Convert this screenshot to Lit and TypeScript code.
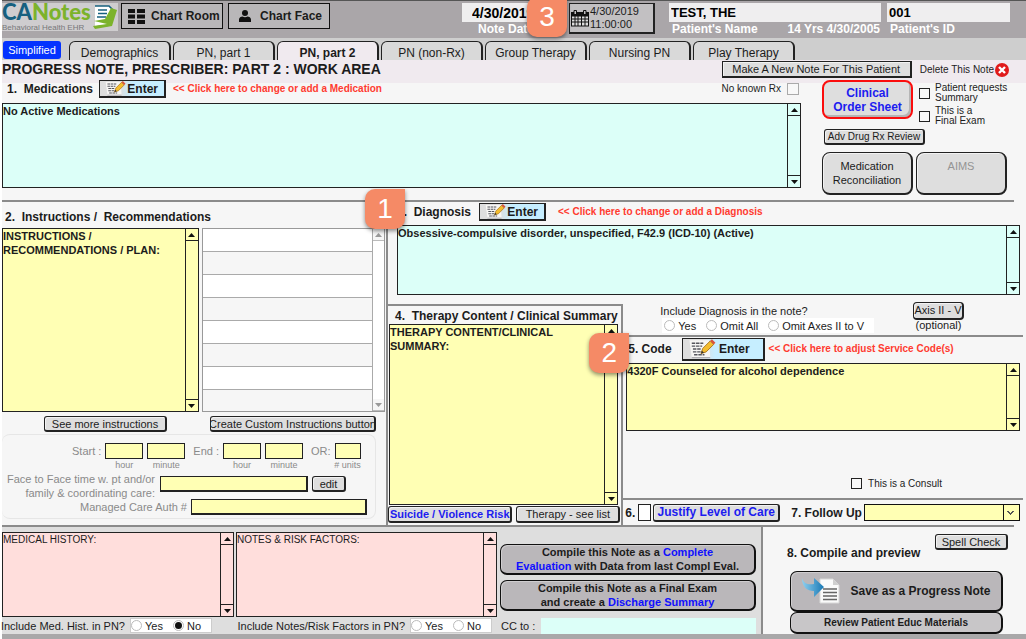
import { LitElement, html, css, svg } from "lit";
import { customElement, property, state } from "lit/decorators.js";
import { classMap } from "lit/directives/class-map.js";

/* Multi-line field with a classic arrow scrollbar on its right side. */
@customElement("note-box")
class NoteBox extends LitElement {
  @property() label = "";
  @property() text = "";
  @property() tone = "mint";
  @property({ type: Boolean }) plain = false;

  static styles = css`
    :host {
      display: flex;
      min-width: 0;
      box-sizing: border-box;
      border: 1px solid #222;
      font-family: "Liberation Sans", Arial, sans-serif;
    }
    textarea {
      flex: 1;
      min-width: 0;
      box-sizing: border-box;
      border: 0;
      margin: 0;
      padding: 0;
      resize: none;
      outline: 0;
      overflow: hidden;
      font: bold 11px/14px "Liberation Sans", Arial, sans-serif;
      color: #1c1c1c;
    }
    .plain {
      font-weight: normal;
      font-size: 10px;
    }
    .mint {
      background: #dcfff8;
    }
    .yellow {
      background: #ffffb4;
    }
    .pink {
      background: #ffdedc;
    }
    .bar {
      display: flex;
      flex-direction: column;
      justify-content: space-between;
      flex: none;
      width: 12px;
      border-left: 1px solid #222;
    }
    button {
      display: flex;
      align-items: center;
      justify-content: center;
      height: 12px;
      padding: 0;
      border: 0 solid #222;
      background: none;
    }
    .up {
      border-bottom-width: 1px;
    }
    .down {
      border-top-width: 1px;
    }
  `;

  private scroll(step: number) {
    this.renderRoot.querySelector("textarea")?.scrollBy(0, step);
  }

  render() {
    return html`
      <textarea
        class=${classMap({ [this.tone]: true, plain: this.plain })}
        aria-label=${this.label}
        .value=${this.text}
      ></textarea>
      <div class=${classMap({ bar: true, [this.tone]: true })}>
        <button class="up" aria-label="Scroll up" @click=${() => this.scroll(-14)}>
          <svg width="7" height="4"><path d="M0 4 3.500 0 7 4z" fill="#111" /></svg>
        </button>
        <button class="down" aria-label="Scroll down" @click=${() => this.scroll(14)}>
          <svg width="7" height="4"><path d="M0 0 3.500 4 7 0z" fill="#111" /></svg>
        </button>
      </div>
    `;
  }
}

const penIcon = svg`
  <path d="M3 1h17l1 15H5z" fill="#f7f6f4"/>
  <path d="M5 3.500h10M5 6h9M6 8.500h7M6 11h8M7 13.500h9" stroke="#55555c" stroke-width="1.200" stroke-dasharray="3 .7"/>
  <path d="M5 16h16" stroke="#a9a9ad"/>
  <path d="m13 12.500 1.500-4.500L21 1.500l3 3-6.500 6.500z" fill="#f4bd2f" stroke="#a8731b" stroke-width=".8"/>
  <path d="m21 1.500 1.500-1.500 3 3L24 4.500z" fill="#d9533b"/>
  <path d="m13 12.500 .8-2.500 1.800 1.700z" fill="#333"/>`;

@customElement("app-root")
class AppRoot extends LitElement {
  @state() private tab = "PN, part 2";

  static styles = css`
    :host {
      display: block;
      font: 11px/14px "Liberation Sans", Arial, sans-serif;
      color: #1c1c1c;
      background: #fff;
    }
    * {
      box-sizing: border-box;
    }
    button,
    input,
    select {
      font: inherit;
      color: inherit;
      margin: 0;
    }
    .page {
      padding-left: 2px;
      overflow: hidden;
    }

    /* header */
    .header {
      display: flex;
      align-items: flex-start;
      height: 38px;
      padding: 2px 16px 0 0;
      border-top: 1px solid #555;
      background: #aaa6a9;
      font-size: 12px;
      font-weight: bold;
    }
    .logo {
      flex: none;
      width: 116px;
      height: 28px;
      background: #cfcdcf;
      margin-right: 3px;
    }
    .logo svg {
      display: block;
      overflow: visible;
    }
    .nav {
      display: flex;
      align-items: center;
      gap: 6px;
      height: 26px;
      width: 102px;
      margin-right: 5px;
      padding: 0 6px;
      border: 1px solid #111;
      background: #b9b7b9;
      font-weight: bold;
      white-space: nowrap;
    }
    .nav svg {
      flex: none;
    }
    .nav.face {
      padding: 0 10px;
      gap: 9px;
    }
    .cell {
      position: relative;
      display: flex;
      flex-direction: column;
      color: #fff;
      white-space: nowrap;
    }
    .cell input {
      height: 19px;
      width: 100%;
      border: 0;
      padding: 0 2px;
      background: #efeeef;
      color: #000;
      font-size: 13px;
      font-weight: bold;
    }
    .cell label,
    .sub {
      display: flex;
      justify-content: space-between;
      padding: 0 1px 0 3px;
    }
    .date {
      width: 103px;
      margin-left: auto;
    }
    .date input {
      padding-left: 10px;
      font-size: 14px;
    }
    .date label {
      padding-left: 16px;
    }
    .stamp {
      display: flex;
      align-items: center;
      gap: 1px;
      width: 86px;
      height: 31px;
      margin: 0 14px 0 4px;
      padding: 0 1px;
      border: 1px solid #222;
      border-width: 1px 2px 2px 1px;
      background: #c2c0c2;
      font-size: 11px;
      font-weight: normal;
      line-height: 13px;
      text-align: left;
    }
    .name {
      width: 212px;
    }
    .pid {
      width: 123px;
      margin-left: 6px;
    }
    .marker {
      position: absolute;
      z-index: 2;
      width: 40px;
      height: 40px;
      border-radius: 10px 0 10px 10px;
      background: #f58a66;
      box-shadow: 0 2px 4px rgba(0, 0, 0, 0.45);
      color: #fff;
      font: 28px/40px "Liberation Sans", Arial, sans-serif;
      text-align: center;
    }
    .m1 {
      left: -23px;
      top: -13px;
    }
    .m2 {
      left: -34px;
      top: -4px;
    }
    .m3 {
      left: 65px;
      top: -6px;
    }

    /* tabs */
    .tabs {
      display: flex;
      align-items: flex-end;
      gap: 2px;
      height: 22px;
      background: #cecece;
    }
    .simple {
      align-self: flex-end;
      width: 58px;
      height: 18px;
      margin: 0 6px 1px 1px;
      padding: 0;
      border: 0;
      border-radius: 3px;
      background: #0433ff;
      color: #fff;
    }
    .tab {
      width: 102px;
      height: 19px;
      padding: 3px 0 0;
      border: 1px solid #222;
      border-width: 1px 2px 0 1px;
      border-radius: 6px 6px 0 0;
      background: #d9d9d9;
      font-size: 12px;
      line-height: 14px;
    }
    .tab.on {
      background: #f0eaef;
      font-weight: bold;
    }

    /* work area */
    .work {
      background: linear-gradient(#f0eaef 23px, #f6f6f6 23px);
    }
    .title {
      display: flex;
      align-items: center;
      height: 19px;
      padding-right: 17px;
    }
    h1 {
      flex: 1;
      margin: 0;
      padding-bottom: 2px;
      font-size: 14px;
      line-height: 16px;
      white-space: nowrap;
    }
    .btn {
      display: inline-flex;
      align-items: center;
      justify-content: center;
      height: 16px;
      padding: 0;
      border: 1px solid #222;
      border-width: 1px 2px 2px 1px;
      border-radius: 3px;
      background: #dedede;
      box-shadow: inset 1px 1px #f2f2f2;
      white-space: nowrap;
      overflow: hidden;
    }
    .square {
      width: 190px;
      height: 17px;
      border-radius: 0;
    }
    .delete {
      display: flex;
      align-items: center;
      gap: 1px;
      margin-left: 8px;
      padding: 0;
      border: 0;
      background: none;
      font-size: 10px;
    }
    h2 {
      margin: 0;
      font-size: 12px;
      line-height: 16px;
      white-space: nowrap;
    }
    .head {
      display: flex;
      align-items: center;
    }
    .enter {
      display: flex;
      align-items: center;
      justify-content: space-between;
      flex: none;
      width: 67px;
      height: 18px;
      padding: 0 6px 0 3px;
      border: 1px solid #222;
      border-width: 1px 2px 2px 1px;
      background: linear-gradient(90deg, #dedede 20px, #c6eeff 32px);
      font-size: 12px;
      font-weight: bold;
    }
    .enter.wide {
      width: 83px;
      height: 23px;
      padding-right: 13px;
    }
    .hint {
      color: #ff3b30;
      font-size: 10px;
      font-weight: bold;
      text-decoration: none;
      white-space: nowrap;
    }
    .meds {
      display: flex;
      padding-bottom: 5px;
    }
    .medlist {
      flex: 1;
      min-width: 0;
    }
    .medlist .head {
      height: 24px;
      padding: 0 2px 4px 5px;
    }
    .medlist .enter {
      margin: 0 7px 0 6px;
    }
    .medlist note-box {
      height: 85px;
    }
    .norx {
      display: flex;
      align-items: center;
      gap: 6px;
      margin-left: auto;
      font-size: 10px;
    }
    input[type="checkbox"] {
      appearance: none;
      flex: none;
      width: 11px;
      height: 11px;
      border: 1px solid #222;
      background: #f8f8f8;
    }
    input[type="checkbox"]:checked {
      background: #222;
    }
    .norx input[type="checkbox"] {
      width: 12px;
      height: 12px;
      border-color: #aaa;
    }
    .orders {
      flex: none;
      width: 205px;
      margin-left: 20px;
      padding: 1px 0 0 1px;
    }
    .pair {
      display: flex;
      gap: 3px;
    }
    .big {
      width: 91px;
      height: 43px;
      border-radius: 8px;
      line-height: 14px;
    }
    .clinical {
      height: 39px;
      border: 2px solid #fb0d0d;
      color: #1c1cf0;
      font-size: 12px;
      font-weight: bold;
      box-shadow: inset -2px -2px #b5b5b5;
    }
    .aims {
      padding-bottom: 14px;
      color: #949494;
    }
    .checks {
      display: flex;
      flex-direction: column;
      gap: 3px;
      padding: 3px 0 0 3px;
    }
    .checks label {
      display: flex;
      align-items: center;
      gap: 5px;
      font-size: 10px;
      line-height: 10px;
    }
    .adv {
      width: 101px;
      margin: 3px 0 7px 2px;
      font-size: 10px;
    }
    .rule {
      height: 2px;
      margin-right: 12px;
      background: #8b8b8b;
    }

    .split {
      display: grid;
      grid-template-columns: minmax(0, 386fr) minmax(0, 638fr);
    }
    .left {
      border-right: 2px solid #8b8b8b;
    }
    .left h2 {
      padding: 7px 0 3px 3px;
    }
    .lists {
      display: flex;
      gap: 3px;
      height: 184px;
      padding-right: 1px;
    }
    .lists note-box {
      flex: 197;
    }
    .list {
      display: flex;
      flex: 183;
      border: 1px solid #999;
      background: #fff;
    }
    .rows {
      flex: 1;
      margin: 0;
      padding: 0;
      list-style: none;
    }
    .rows li {
      height: 23px;
      border-bottom: 1px solid #aaa;
    }
    .rows li:last-child {
      height: 21px;
      border: 0;
    }
    .rows li:nth-child(even) {
      background: #f6f6f6;
    }
    .ghostbar {
      display: flex;
      flex-direction: column;
      justify-content: space-between;
      width: 12px;
      border-left: 1px solid #aaa;
    }
    .ghostbar button {
      display: flex;
      align-items: center;
      justify-content: center;
      height: 12px;
      padding: 0;
      border: 0;
      border-bottom: 1px solid #bbb;
      background: #f6f6f6;
    }
    .actions {
      display: flex;
      justify-content: space-between;
      padding: 4px 10px 2px 42px;
    }
    .more {
      width: 123px;
    }
    .custom {
      width: 166px;
    }
    .times {
      height: 85px;
      margin: 0 10px 6px 0;
      padding: 8px 8px 0 0;
      border: 1px solid #e6e6e6;
      border-left: 0;
      border-radius: 8px;
      color: #8a8a8a;
    }
    .clock {
      display: flex;
      align-items: flex-start;
      gap: 4px;
      height: 29px;
      padding-left: 70px;
      line-height: 16px;
      white-space: nowrap;
    }
    .clock .part {
      display: flex;
      flex-direction: column;
      align-items: center;
      width: 38px;
      font-size: 9px;
      line-height: 12px;
    }
    .clock .part.units {
      width: 26px;
    }
    .gap {
      margin-left: 4px;
    }
    .yin {
      width: 100%;
      height: 16px;
      padding: 0 2px;
      border: 1px solid #222;
      background: #ffffb4;
    }
    .deep {
      border-width: 1px 2px 2px 1px;
    }
    .face2 {
      display: flex;
      align-items: flex-start;
      height: 28px;
    }
    .face2 label {
      width: 155px;
      padding-right: 2px;
      text-align: right;
      white-space: nowrap;
    }
    .face2 .yin {
      width: 148px;
      margin: 4px 4px 0 3px;
    }
    .edit {
      width: 34px;
      margin-top: 4px;
      color: #1c1c1c;
    }
    .auth {
      display: flex;
      align-items: center;
      justify-content: flex-end;
      gap: 4px;
      height: 14px;
    }
    .auth .yin {
      width: 176px;
    }

    .dx {
      position: relative;
    }
    .dx .head {
      height: 23px;
      padding: 0 0 3px 9px;
    }
    .dx .enter {
      margin: 0 12px 0 8px;
    }
    .dx note-box {
      height: 70px;
      margin: 0 6px 0 9px;
    }
    .lower {
      display: flex;
    }
    .therapy {
      flex: 234;
      margin-top: 9px;
      border: 2px solid #8b8b8b;
      border-width: 2px 2px 0 0;
      min-width: 0;
    }
    .therapy h2 {
      padding: 2px 0 0 7px;
      overflow: hidden;
    }
    .therapy note-box {
      height: 181px;
      margin: 0 3px 0 1px;
    }
    .therapy .pair {
      padding: 1px 1px 2px 0;
      gap: 4px;
    }
    .therapy .btn {
      height: 17px;
    }
    .risk {
      flex: 124;
      color: #1c1cf0;
      font-weight: bold;
    }
    .see {
      flex: 103;
    }
    .side {
      flex: 404;
      min-width: 0;
    }
    .include {
      display: flex;
      justify-content: space-between;
      height: 40px;
      padding: 7px 62px 0 37px;
    }
    fieldset {
      margin: 0;
      padding: 0;
      border: 0;
    }
    .include legend {
      padding: 2px 0 0;
    }
    .radios {
      display: flex;
      flex: none;
      align-items: center;
      gap: 10px;
      height: 15px;
      padding: 0 10px 0 2px;
      background: #fff;
      white-space: nowrap;
    }
    .include .radios {
      margin-left: 2px;
    }
    .radios label {
      display: flex;
      align-items: center;
      gap: 3px;
    }
    input[type="radio"] {
      appearance: none;
      width: 11px;
      height: 11px;
      border: 1px solid #bbb;
      border-radius: 50%;
      background: #fff;
    }
    input[type="radio"]:checked {
      background: #111;
      border: 2px solid #fff;
      outline: 1px solid #bbb;
      outline-offset: -1px;
    }
    .axis {
      display: flex;
      flex-direction: column;
      align-items: center;
      line-height: 11px;
    }
    .axis .btn {
      width: 51px;
      height: 18px;
      border-radius: 4px;
    }
    .side .rule {
      margin-right: 3px;
    }
    .code {
      position: relative;
    }
    .code .head {
      height: 26px;
      padding: 0 0 2px 5px;
    }
    .code .enter {
      margin: 0 4px 0 10px;
    }
    .code note-box {
      height: 68px;
      margin: 0 6px 0 3px;
    }
    .consult {
      display: flex;
      align-items: center;
      justify-content: flex-end;
      gap: 6px;
      height: 67px;
      padding: 38px 84px 0 0;
      font-size: 10px;
    }
    .care {
      display: flex;
      align-items: center;
      height: 25px;
      padding: 0 6px 0 2px;
    }
    .care input[type="checkbox"] {
      width: 13px;
      height: 17px;
      margin: 0 2px 0 3px;
      background: #fff;
    }
    .justify {
      width: 127px;
      height: 18px;
      margin-right: 11px;
      color: #1c1cf0;
      font-size: 12px;
      font-weight: bold;
    }
    .pick {
      flex: 1;
      min-width: 0;
      height: 17px;
      margin-left: 2px;
      border: 1px solid #111;
      border-radius: 0;
      appearance: none;
      background:
        linear-gradient(45deg, transparent 50%, #555 50% 65%, transparent 65%) right 8px center / 4px 4px no-repeat,
        linear-gradient(-45deg, transparent 50%, #555 50% 65%, transparent 65%) right 5px center / 4px 4px no-repeat,
        linear-gradient(#111, #111) right 15px top / 1px 100% no-repeat,
        #ffffb4;
    }

    /* bottom */
    .bottom {
      display: grid;
      grid-template-columns: minmax(0, 761fr) minmax(0, 263fr);
      border-bottom: 5px solid #a9a8a9;
    }
    .history {
      display: grid;
      grid-template-columns: minmax(0, 232fr) minmax(0, 261fr) minmax(0, 257fr);
      align-content: start;
      column-gap: 2px;
      padding: 5px 5px 0 0;
      border-right: 2px solid #8b8b8b;
      background: #dedede;
    }
    .history note-box {
      height: 85px;
    }
    .ask {
      display: flex;
      align-items: center;
      justify-content: flex-end;
      gap: 5px;
      height: 17px;
      white-space: nowrap;
    }
    .ask .radios {
      width: 82px;
      border: 1px solid #ccc;
      padding: 0;
    }
    .first {
      padding-right: 22px;
    }
    .second {
      padding-right: 5px;
    }
    .compile {
      display: flex;
      flex-direction: column;
      gap: 5px;
      padding: 12px 0 0 1px;
    }
    .dark {
      display: block;
      border: 1px solid #111;
      border-width: 1px 2px 2px 1px;
      border-radius: 7px;
      background: #bab7ba;
      font-weight: bold;
      text-align: center;
      box-shadow: inset 1px 1px #cfcdcf;
    }
    .compile .dark {
      height: 31px;
      padding: 0;
      font-size: 11px;
      line-height: 14px;
      white-space: nowrap;
    }
    .blue {
      color: #1010ff;
    }
    .cc {
      display: flex;
      align-items: center;
      gap: 6px;
      height: 17px;
      padding-left: 2px;
      white-space: nowrap;
    }
    .cc input {
      flex: 1;
      min-width: 0;
      height: 16px;
      border: 0;
      padding: 0;
      background: #dcfff8;
    }
    .finish {
      display: flex;
      flex-direction: column;
      padding: 7px 23px 0 27px;
      background: #f6f6f6;
    }
    .spell {
      align-self: flex-end;
      width: 73px;
      margin-right: -5px;
    }
    .finish h2 {
      margin: -5px 0 10px -3px;
    }
    .save {
      display: flex;
      align-items: center;
      justify-content: center;
      gap: 9px;
      height: 41px;
      font-size: 12px;
      white-space: nowrap;
    }
    .finish .review {
      height: 22px;
      padding: 0;
      font-size: 10px;
      background: #c8c6c8;
    }
  `;

  private enter(wide = false) {
    return html`<button class=${classMap({ enter: true, wide })}>
      <svg width=${wide ? 30 : 23} height=${wide ? 20 : 15} viewBox="0 0 26 17">${penIcon}</svg>
      Enter
    </button>`;
  }

  private radios(name: string, options: string[], checked = "") {
    return html`<div class="radios">
      ${options.map(
        (o) => html`<label><input type="radio" name=${name} ?checked=${o === checked} />${o}</label>`
      )}
    </div>`;
  }

  private timePart(caption: string, name: string, cls = "") {
    return html`<label class="part ${cls}"><input class="yin" name=${name} />${caption}</label>`;
  }

  private header() {
    return html`<header class="header">
      <div class="logo" role="img" aria-label="ICANotes Behavioral Health EHR">
        <svg width="116" height="28" viewBox="0 0 116 28">
          <text y="17" font-family="Lato, sans-serif" font-weight="900" font-size="22" fill="#17607f">CA<tspan fill="#7cb32b">Notes</tspan></text>
          <text x="0" y="27" font-family="Liberation Sans, sans-serif" font-weight="400" font-size="8" fill="#77787a">Behavioral Health EHR</text>
          <path d="M93 3h14l3 3-2 16-15 2" fill="#fff" stroke="#17607f" stroke-width="1.600" />
          <path d="M96 7h9M96 10.500h9M95 14h9" stroke="#17607f" stroke-width="1.300" />
          <path d="M92 18l11-2 6-11 6 2-5 16-17 3-2-3 14-2z" fill="#7cb32b" />
        </svg>
      </div>
      <button class="nav">
        <svg width="17" height="15" viewBox="0 0 17 15">
          <path d="M0 0h7v4H0zM9 0h8v4H9zM0 5.500h7v4H0zM9 5.500h8v4H9zM0 11h7v4H0zM9 11h8v4H9z" fill="#111" />
        </svg>
        Chart Room
      </button>
      <button class="nav face">
        <svg width="12" height="12" viewBox="0 0 12 12">
          <circle cx="6" cy="3" r="3" fill="#111" />
          <path d="M0 12V9.500C0 7.500 2 6.500 3.500 6.500 5 7.500 7 7.500 8.500 6.500 10 6.500 12 7.500 12 9.500V12z" fill="#111" />
        </svg>
        Chart Face
      </button>
      <div class="cell date">
        <input id="date" value="4/30/2019" />
        <label for="date">Note Date</label>
        <div class="marker m3">3</div>
      </div>
      <button class="stamp">
        <svg width="18" height="18" viewBox="0 0 18 18">
          <path d="M0 3h18v14.500H0z" fill="#111" />
          <path d="M1 7.500h16v9H1z" fill="#ddd" />
          <path d="M1 10h16M1 13h16M4 7v10M7 7v10M10.500 7v10M14 7v10" stroke="#111" stroke-width="1" />
          <path d="M3 5V1.500h2.500V5M12.500 5V1.500H15V5" fill="#c2c0c2" stroke="#111" />
        </svg>
        <span>4/30/2019<br />11:00:00</span>
      </button>
      <div class="cell name">
        <input aria-label="Patient's Name" value="TEST, THE" />
        <div class="sub"><span>Patient's Name</span><span>14 Yrs 4/30/2005</span></div>
      </div>
      <div class="cell pid">
        <input id="pid" value="001" />
        <label for="pid">Patient's ID</label>
      </div>
    </header>`;
  }

  render() {
    const tabs = ["Demographics", "PN, part 1", "PN, part 2", "PN (non-Rx)", "Group Therapy", "Nursing PN", "Play Therapy"];
    return html`<div class="page">
      ${this.header()}
      <nav class="tabs">
        <button class="simple">Simplified</button>
        ${tabs.map(
          (t) => html`<button class=${classMap({ tab: true, on: t === this.tab })} @click=${() => (this.tab = t)}>${t}</button>`
        )}
      </nav>
      <main class="work">
        <div class="title">
          <h1>PROGRESS NOTE, PRESCRIBER: PART 2 : WORK AREA</h1>
          <button class="btn square">Make A New Note For This Patient</button>
          <button class="delete">
            Delete This Note
            <svg width="14" height="14" viewBox="0 0 14 14">
              <circle cx="7" cy="7" r="7" fill="#e01b1b" />
              <path d="m4 4 6 6M10 4l-6 6" stroke="#fff" stroke-width="2.400" />
            </svg>
          </button>
        </div>

        <section class="meds">
          <div class="medlist">
            <div class="head">
              <h2>1. &nbsp;Medications</h2>
              ${this.enter()}
              <a class="hint" href="#medications">&lt;&lt; Click here to change or add a Medication</a>
              <label class="norx">No known Rx <input type="checkbox" /></label>
            </div>
            <note-box label="Medications" text="No Active Medications"></note-box>
          </div>
          <div class="orders">
            <div class="pair">
              <button class="btn big clinical">Clinical<br />Order Sheet</button>
              <div class="checks">
                <label><input type="checkbox" /><span>Patient requests<br />Summary</span></label>
                <label><input type="checkbox" /><span>This is a<br />Final Exam</span></label>
              </div>
            </div>
            <button class="btn adv">Adv Drug Rx Review</button>
            <div class="pair">
              <button class="btn big">Medication<br />Reconciliation</button>
              <button class="btn big aims">AIMS</button>
            </div>
          </div>
        </section>
        <div class="rule"></div>

        <div class="split">
          <section class="left">
            <h2>2. &nbsp;Instructions / &nbsp;Recommendations</h2>
            <div class="lists">
              <note-box tone="yellow" label="Instructions" .text=${"INSTRUCTIONS /\nRECOMMENDATIONS / PLAN:"}></note-box>
              <div class="list">
                <ul class="rows">
                  ${Array.from({ length: 8 }, () => html`<li></li>`)}
                </ul>
                <div class="ghostbar">
                  <button aria-label="Scroll up"><svg width="7" height="4"><path d="M0 4 3.500 0 7 4z" fill="#999" /></svg></button>
                  <button aria-label="Scroll down"><svg width="7" height="4"><path d="M0 0 3.500 4 7 0z" fill="#999" /></svg></button>
                </div>
              </div>
            </div>
            <div class="actions">
              <button class="btn more">See more instructions</button>
              <button class="btn custom">Create Custom Instructions button</button>
            </div>
            <div class="times">
              <div class="clock">
                <span>Start :</span>
                ${this.timePart("hour", "start-hour")} ${this.timePart("minute", "start-minute")}
                <span class="gap">End :</span>
                ${this.timePart("hour", "end-hour")} ${this.timePart("minute", "end-minute")}
                <span class="gap">OR:</span>
                ${this.timePart("# units", "units", "units")}
              </div>
              <div class="face2">
                <label for="face">Face to Face time w. pt and/or<br />family &amp; coordinating care:</label>
                <input id="face" class="yin deep" />
                <button class="btn edit">edit</button>
              </div>
              <div class="auth">
                <label for="auth">Managed Care Auth #</label>
                <input id="auth" class="yin deep" />
              </div>
            </div>
          </section>

          <div>
            <section class="dx">
              <div class="marker m1">1</div>
              <div class="head">
                <h2>3. &nbsp;Diagnosis</h2>
                ${this.enter()}
                <a class="hint" href="#diagnosis">&lt;&lt; Click here to change or add a Diagnosis</a>
              </div>
              <note-box
                label="Diagnosis"
                text="Obsessive-compulsive disorder, unspecified, F42.9 (ICD-10) (Active)"
              ></note-box>
            </section>
            <div class="lower">
              <section class="therapy">
                <h2>4. &nbsp;Therapy Content / Clinical Summary</h2>
                <note-box tone="yellow" label="Therapy content" .text=${"THERAPY CONTENT/CLINICAL\nSUMMARY:"}></note-box>
                <div class="pair">
                  <button class="btn risk">Suicide / Violence Risk</button>
                  <button class="btn see">Therapy - see list</button>
                </div>
              </section>
              <div class="side">
                <div class="include">
                  <fieldset>
                    <legend>Include Diagnosis in the note?</legend>
                    ${this.radios("include", ["Yes", "Omit All", "Omit Axes II to V"])}
                  </fieldset>
                  <div class="axis">
                    <button class="btn">Axis II - V</button>
                    (optional)
                  </div>
                </div>
                <div class="rule"></div>
                <section class="code">
                  <div class="marker m2">2</div>
                  <div class="head">
                    <h2>5. Code</h2>
                    ${this.enter(true)}
                    <a class="hint" href="#code">&lt;&lt; Click here to adjust Service Code(s)</a>
                  </div>
                  <note-box tone="yellow" label="Code" text="4320F Counseled for alcohol dependence"></note-box>
                </section>
                <label class="consult"><input type="checkbox" />This is a Consult</label>
                <div class="rule"></div>
                <div class="care">
                  <h2>6.</h2>
                  <input type="checkbox" aria-label="Level of care justified" />
                  <button class="btn justify">Justify Level of Care</button>
                  <h2><label for="follow">7. Follow Up</label></h2>
                  <select id="follow" class="pick"><option></option></select>
                </div>
              </div>
            </div>
          </div>
        </div>
        <div class="rule"></div>

        <div class="bottom">
          <section class="history">
            <note-box tone="pink" plain label="Medical history" text="MEDICAL HISTORY:"></note-box>
            <note-box tone="pink" plain label="Risk factors" text="NOTES &amp; RISK FACTORS:"></note-box>
            <div class="compile">
              <button class="dark">
                Compile this Note as a <span class="blue">Complete</span><br />
                <span class="blue">Evaluation</span> with Data from last Compl Eval.
              </button>
              <button class="dark">
                Compile this Note as a Final Exam<br />and create a <span class="blue">Discharge Summary</span>
              </button>
            </div>
            <div class="ask first">Include Med. Hist. in PN? ${this.radios("hist", ["Yes", "No"], "No")}</div>
            <div class="ask second">Include Notes/Risk Factors in PN? ${this.radios("risk", ["Yes", "No"])}</div>
            <label class="cc">CC to : <input /></label>
          </section>
          <section class="finish">
            <button class="btn spell">Spell Check</button>
            <h2>8. Compile and preview</h2>
            <button class="dark save">
              <svg width="40" height="28" viewBox="0 0 40 28">
                <defs>
                  <linearGradient id="swoop">
                    <stop offset="0" stop-color="#8fd0f0" />
                    <stop offset="1" stop-color="#1878b4" />
                  </linearGradient>
                </defs>
                <path d="M19 2h13l6 6v18H19z" fill="#fafafa" stroke="#d8d8d8" />
                <path d="M32 2v6h6z" fill="#cfcfcf" />
                <path d="M22 12h14M22 15.500h14M22 19h14M22 22.500h14" stroke="#666" stroke-width="1.400" />
                <path d="M1 1c2 6 6 7 12 6V1l10 9-10 10v-6C6 14 1 10 1 1z" fill="url(#swoop)" />
              </svg>
              Save as a Progress Note
            </button>
            <button class="dark review">Review Patient Educ Materials</button>
          </section>
        </div>
      </main>
    </div>`;
  }
}
